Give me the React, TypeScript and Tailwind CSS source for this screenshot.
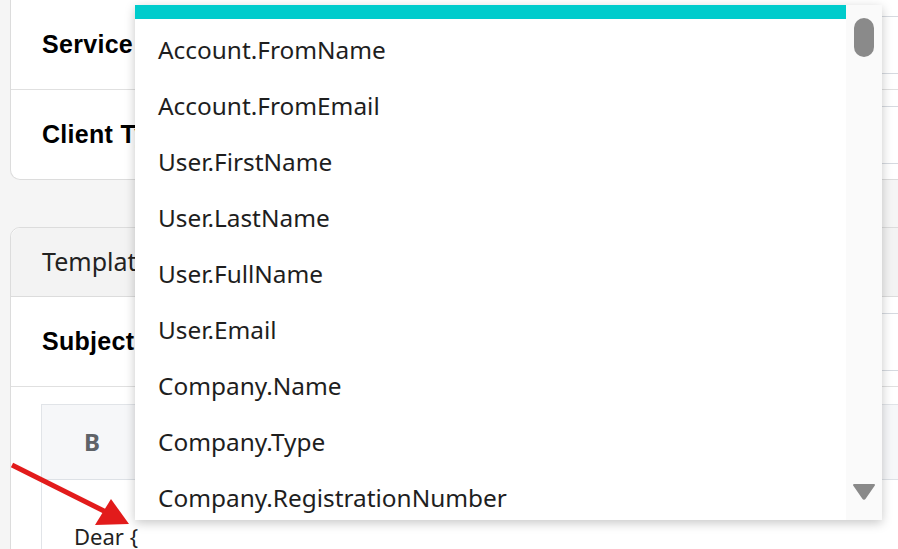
import React from "react";

const items = [
  "Account.FromName",
  "Account.FromEmail",
  "User.FirstName",
  "User.LastName",
  "User.FullName",
  "User.Email",
  "Company.Name",
  "Company.Type",
  "Company.RegistrationNumber",
];

export default function App() {
  return (
    <div className="relative w-[898px] h-[549px] overflow-hidden bg-[#f5f5f5]">
      <div className="flex flex-col w-[1100px] pl-[10px] pt-0">
        {/* Card 1 */}
        <div className="flex flex-col bg-white border border-t-0 border-[#dcdcdc] rounded-b-[10px]">
          <div className="flex items-center h-[90px] border-b border-[#e0e0e0]">
            <div className="w-[300px] pl-[31px] text-[25px] tracking-[0.3px] font-bold text-black [font-family:'Liberation_Sans',Arial,sans-serif]">Service Name</div>
            <div className="ml-[560px] h-[58px] flex-1 border border-[#d6dae0] rounded-[4px]" />
          </div>
          <div className="flex items-center h-[89px]">
            <div className="w-[300px] pl-[31px] text-[25px] tracking-[0.3px] font-bold text-black [font-family:'Liberation_Sans',Arial,sans-serif]">Client Type</div>
            <div className="ml-[560px] h-[58px] flex-1 border border-[#d6dae0] rounded-[4px]" />
          </div>
        </div>

        {/* Card 2 */}
        <div className="mt-[47px] flex flex-col bg-white border border-[#dcdcdc] rounded-t-[10px]">
          <div className="flex items-center h-[69px] bg-[#f3f3f3] border-b border-[#dcdcdc] rounded-t-[10px] pl-[31px] text-[25px] text-[#222] [font-family:'Noto_Sans',sans-serif]">
            Template
          </div>
          <div className="flex items-center h-[90px] border-b border-[#e0e0e0]">
            <div className="w-[300px] pl-[31px] text-[25px] tracking-[0.3px] font-bold text-black [font-family:'Liberation_Sans',Arial,sans-serif]">Subject</div>
            <div className="ml-[560px] h-[58px] flex-1 border border-[#d6dae0] rounded-[4px]" />
          </div>
          <div className="pt-[17px] pl-[30px]">
            <div className="border border-[#e1e4e8] border-r-0">
              <div className="flex items-center h-[75px] bg-[#f6f7f9] border-b border-[#dde1e6]">
                <span className="ml-[42px] text-[24px] font-bold text-[#5f6368] [font-family:'Noto_Sans',sans-serif]">B</span>
              </div>
              <div className="pt-[40px] pl-[32px] text-[22px] text-[#222] [font-family:'Noto_Sans',sans-serif] leading-[32px] whitespace-nowrap">
                Dear {"{"}
              </div>
            </div>
          </div>
        </div>
      </div>

      {/* Red arrow */}
      <svg className="absolute left-0 top-[455px]" width="140" height="80" viewBox="0 0 140 80">
        <line x1="12" y1="10" x2="106" y2="57" stroke="#e21b1b" strokeWidth="5" />
        <polygon points="95,70 111,44 129,69" fill="#e21b1b" />
      </svg>

      {/* Dropdown */}
      <div className="absolute left-[135px] top-[5px] w-[747px] h-[515px] bg-white flex shadow-[0_3px_10px_rgba(0,0,0,0.22)] overflow-hidden">
        <div className="flex-1 flex flex-col">
          <div className="h-[14px] bg-[#00cccc] shrink-0" />
          <div className="pt-[3px] flex flex-col">
            {items.map((t) => (
              <div
                key={t}
                className="h-[56px] shrink-0 flex items-center pl-[23px] text-[24.4px] text-[#1e1e1e] [font-family:'Noto_Sans',sans-serif] whitespace-nowrap"
              >
                {t}
              </div>
            ))}
          </div>
        </div>
        <div className="w-[36px] bg-[#fafafa] flex flex-col items-center justify-between pt-[13px] pb-[19px]">
          <div className="w-[20px] h-[39px] rounded-full bg-[#8a8a8a]" />
          <svg width="24" height="18" viewBox="0 0 24 18">
            <path d="M2 2 H22 L13 15 Q12 16.5 11 15 Z" fill="#8a8a8a" stroke="#8a8a8a" strokeWidth="2" strokeLinejoin="round" />
          </svg>
        </div>
      </div>
    </div>
  );
}
